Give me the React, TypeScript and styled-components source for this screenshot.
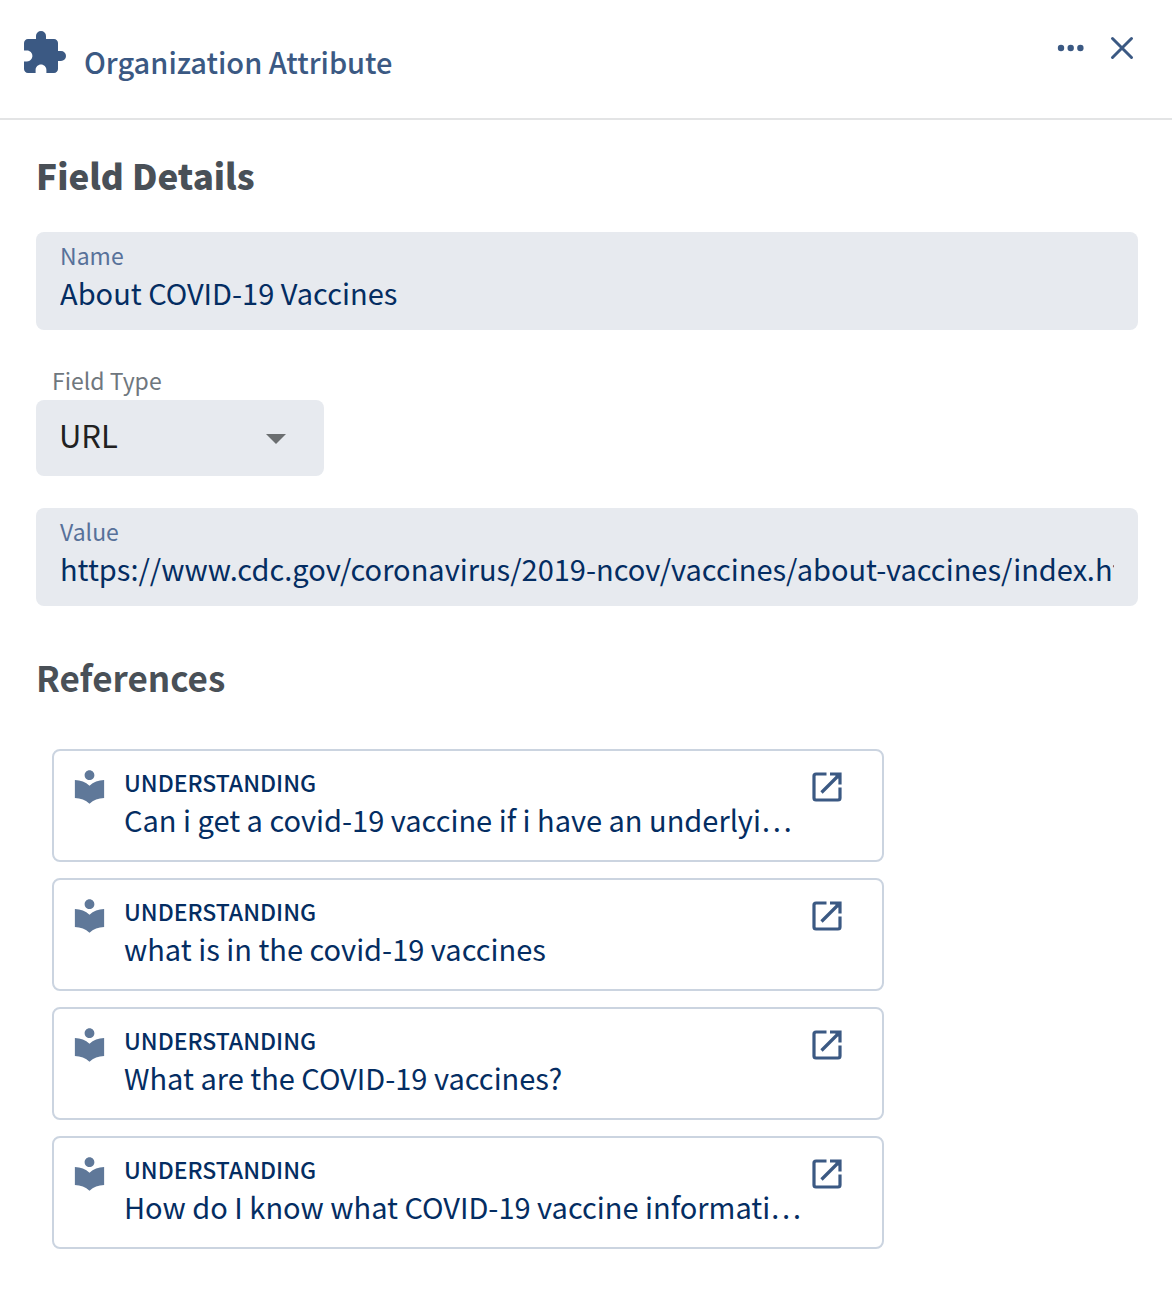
import React from "react";
import styled, { createGlobalStyle } from "styled-components";
import { MdExtension, MdLocalLibrary } from "react-icons/md";

const GlobalStyle = createGlobalStyle`
  *, *::before, *::after { box-sizing: border-box; }
  body {
    margin: 0;
    background: #ffffff;
    font-family: "Noto Sans CJK KR", "Noto Sans CJK SC", "Noto Sans", sans-serif;
    color: #042d62;
  }
`;

const Header = styled.header`
  display: flex;
  justify-content: space-between;
  align-items: flex-start;
  height: 120px;
  padding: 28px 32px 0 20px;
  border-bottom: 2px solid #e3e4e5;
  color: #3b5983;
`;

const Brand = styled.div`
  display: flex;
  align-items: flex-start;
  gap: 16px;
  padding-top: 1px;
`;

const Title = styled.h1`
  margin: 0;
  padding-top: 12px;
  font-size: 29px;
  line-height: 40px;
  font-weight: 500;
`;

const Actions = styled.div`
  display: flex;
  gap: 16px;
`;

const IconButton = styled.button`
  display: flex;
  align-items: center;
  justify-content: center;
  width: 36px;
  height: 40px;
  padding: 0;
  border: 0;
  background: none;
  color: inherit;
  cursor: pointer;
`;

const Main = styled.main`
  padding: 29px 34px 40px 36px;
`;

const Heading = styled.h2<{ $strong?: boolean }>`
  margin: 0 0 31px;
  font-size: 35px;
  line-height: 52px;
  font-weight: ${(p) => (p.$strong ? 900 : 700)};
  color: #495057;
`;

const TextField = styled.label`
  display: block;
  height: 98px;
  padding: 7px 24px;
  border-radius: 8px;
  background: #e7eaef;
`;

const FieldLabel = styled.span`
  display: block;
  font-size: 23px;
  line-height: 32px;
  color: #57719a;
`;

const TextInput = styled.input`
  display: block;
  width: 100%;
  height: 42px;
  padding: 0;
  border: 0;
  outline: 0;
  background: none;
  font-family: inherit;
  font-size: 29px;
  line-height: 42px;
  color: inherit;
`;

const TypeField = styled.div`
  display: flex;
  flex-direction: column;
  align-items: flex-start;
  padding: 34px 0 32px;
`;

const TypeLabel = styled.label`
  padding: 0 16px 4px;
  font-size: 23px;
  line-height: 32px;
  color: #6f777e;
`;

const SelectBox = styled.div`
  display: grid;
  width: 288px;
  align-items: center;
  & > * { grid-area: 1 / 1; }
`;

const Select = styled.select`
  appearance: none;
  height: 76px;
  padding: 0 23px 8px;
  border: 0;
  border-radius: 8px;
  background: #e7eaef;
  font-family: inherit;
  font-size: 31px;
  color: #212121;
`;

const Caret = styled.svg`
  justify-self: end;
  margin: 2px 38px 0 0;
  pointer-events: none;
`;

const References = styled.section`
  padding-top: 45px;
`;

const List = styled.ul`
  display: flex;
  flex-direction: column;
  gap: 16px;
  max-width: 848px;
  margin: 0;
  padding: 15px 0 0 16px;
  list-style: none;
`;

const Card = styled.li`
  display: flex;
  height: 113px;
  padding: 14px 35px 0 16px;
  border: 2px solid #cbd4e0;
  border-radius: 8px;
`;

const CardIcon = styled.span`
  flex: none;
  width: 54px;
  padding-top: 2px;
  color: #5f7899;
`;

const CardText = styled.div`
  flex: 1;
  min-width: 0;
`;

const Kind = styled.div`
  font-size: 23px;
  line-height: 34px;
  font-weight: 500;
`;

const Question = styled.div`
  overflow: hidden;
  font-size: 29px;
  line-height: 40px;
  white-space: nowrap;
  text-overflow: ellipsis;
`;

const OpenLink = styled.a`
  flex: none;
  width: 40px;
  height: 42px;
  padding-top: 2px;
  color: #3b5983;
`;

const references = [
  "Can i get a covid-19 vaccine if i have an underlyi…",
  "what is in the covid-19 vaccines",
  "What are the COVID-19 vaccines?",
  "How do I know what COVID-19 vaccine informati…",
];

function OpenIcon() {
  return (
    <svg width="40" height="40" viewBox="0 0 40 40" fill="none" stroke="currentColor" strokeWidth="3.2">
      <path d="M19.500 7H9a2 2 0 0 0-2 2V31a2 2 0 0 0 2 2H31a2 2 0 0 0 2-2V20.500" />
      <path d="M23 7H33V17.500M32.500 7.500L14.500 25.500" />
      <path d="M27 7H33V13Z" fill="currentColor" stroke="none" />
    </svg>
  );
}

export default function App() {
  return (
    <>
      <GlobalStyle />
      <Header>
        <Brand>
          <MdExtension size={48} />
          <Title>Organization Attribute</Title>
        </Brand>
        <Actions>
          <IconButton aria-label="More options">
            <svg width="28" height="8" viewBox="0 0 28 8" fill="currentColor">
              <circle cx="5" cy="4" r="3.200" />
              <circle cx="14.700" cy="4" r="3.200" />
              <circle cx="24.400" cy="4" r="3.200" />
            </svg>
          </IconButton>
          <IconButton aria-label="Close">
            <svg width="24" height="24" viewBox="0 0 24 24" fill="none" stroke="currentColor" strokeWidth="3" strokeLinecap="round">
              <path d="M2.500 2.500L21.500 21.500M21.500 2.500L2.500 21.500" />
            </svg>
          </IconButton>
        </Actions>
      </Header>
      <Main>
        <Heading $strong>Field Details</Heading>
        <TextField>
          <FieldLabel>Name</FieldLabel>
          <TextInput defaultValue="About COVID-19 Vaccines" />
        </TextField>
        <TypeField>
          <TypeLabel htmlFor="field-type">Field Type</TypeLabel>
          <SelectBox>
            <Select id="field-type" defaultValue="url">
              <option value="url">URL</option>
            </Select>
            <Caret width="20" height="10" viewBox="0 0 20 10">
              <path d="M0 0H20L10 10Z" fill="#6b6e70" />
            </Caret>
          </SelectBox>
        </TypeField>
        <TextField>
          <FieldLabel>Value</FieldLabel>
          <TextInput defaultValue="https://www.cdc.gov/coronavirus/2019-ncov/vaccines/about-vaccines/index.html" />
        </TextField>
        <References>
          <Heading>References</Heading>
          <List>
            {references.map((text) => (
              <Card key={text}>
                <CardIcon>
                  <MdLocalLibrary size={39} />
                </CardIcon>
                <CardText>
                  <Kind>UNDERSTANDING</Kind>
                  <Question>{text}</Question>
                </CardText>
                <OpenLink href="#" aria-label="Open reference">
                  <OpenIcon />
                </OpenLink>
              </Card>
            ))}
          </List>
        </References>
      </Main>
    </>
  );
}
